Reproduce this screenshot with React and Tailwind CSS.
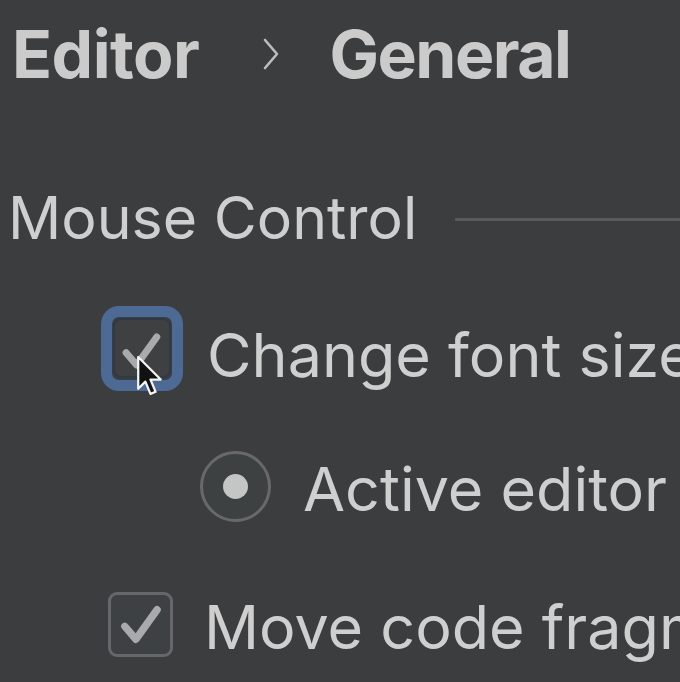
import React from 'react';

const font = { fontFamily: 'Inter, "Noto Sans", sans-serif' };

function Check({ className }) {
  return (
    <svg viewBox="0 0 64 64" className={className}>
      <path d="M15 34 L27 48 L50 16" fill="none" stroke="#a9aaab" strokeWidth="8" strokeLinecap="round" strokeLinejoin="round" />
    </svg>
  );
}

function Cursor() {
  return (
    <svg viewBox="0 0 30 44" className="absolute left-[136px] top-[355px] w-[31px] h-[45px]">
      <path d="M2 2 L2 33 L9 26 L14 38 L19 36 L14 24 L24 24 Z" fill="#111" stroke="#f4f4f4" strokeWidth="2.2" strokeLinejoin="round" />
    </svg>
  );
}

export default function App() {
  return (
    <div className="relative w-[680px] h-[682px] bg-[#3c3d3f] overflow-hidden text-[#cfcfcf] whitespace-nowrap" style={font}>
      {/* breadcrumb */}
      <div className="flex items-center h-[108px] pl-[12px] leading-none">
        <span className="text-[66px] font-bold text-[#cbcbcb] tracking-[-0.5px]">Editor</span>
        <svg viewBox="0 0 20 32" className="shrink-0 ml-[62px] w-[20px] h-[32px]">
          <path d="M4 2 L16 16 L4 30" fill="none" stroke="#bdbdbd" strokeWidth="2.6" strokeLinecap="round" strokeLinejoin="round" />
        </svg>
        <span className="ml-[48px] text-[66px] font-bold text-[#cbcbcb] tracking-[-1.5px]">General</span>
      </div>

      {/* section title */}
      <div className="flex items-center h-[82px] mt-[68px] pl-[8px] leading-none">
        <span className="text-[59px]">Mouse Control</span>
        <div className="flex-1 h-[3px] bg-[#58595b] ml-[38px] mt-[4px]" />
      </div>

      {/* change font size */}
      <div className="flex items-center h-[96px] mt-[42px] pl-[101px] leading-none">
        <div className="shrink-0 w-[82px] h-[85px] rounded-[18px] border-[11px] border-[#4c6a93] flex items-center justify-center">
          <div className="w-[58px] h-[60px] rounded-[8px] bg-[#3e4042] border-[2px] border-[#2f3a48] flex items-center justify-center">
            <Check className="w-[56px] h-[56px] -ml-[2px] mt-[6px]" />
          </div>
        </div>
        <span className="ml-[24px] pt-[14px] text-[61px]">Change font size</span>
      </div>

      {/* active editor */}
      <div className="flex items-center h-[80px] mt-[50px] pl-[200px] leading-none">
        <div className="shrink-0 w-[71px] h-[71px] rounded-full border-[3px] border-[#67696b] bg-[#3d4142] flex items-center justify-center">
          <div className="w-[25px] h-[25px] rounded-full bg-[#c4c5c5]" />
        </div>
        <span className="ml-[32px] pt-[6px] text-[61px]">Active editor</span>
      </div>

      {/* move code */}
      <div className="flex items-center h-[80px] mt-[58px] pl-[108px] leading-none">
        <div className="shrink-0 w-[65px] h-[65px] rounded-[9px] border-[3px] border-[#65676a] bg-[#3e4143] flex items-center justify-center">
          <Check className="w-[59px] h-[59px]" />
        </div>
        <span className="ml-[31px] pt-[6px] text-[61px]">Move code fragments</span>
      </div>

      <Cursor />
    </div>
  );
}
